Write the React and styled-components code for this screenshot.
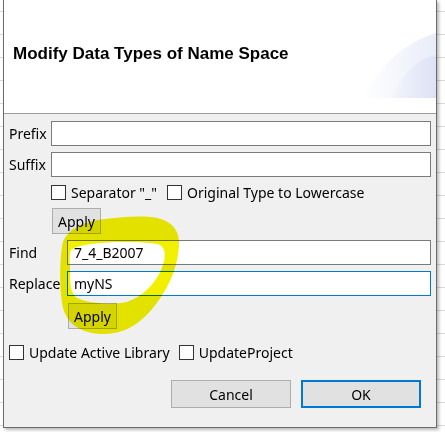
import React from "react"
import styled, { createGlobalStyle } from "styled-components"

const GlobalStyle = createGlobalStyle`
  html, body {
    margin: 0;
    padding: 0;
  }
  body {
    width: 445px;
    height: 432px;
    overflow: hidden;
    background-color: #ffffff;
    background-image: repeating-linear-gradient(
      to bottom,
      transparent 0,
      transparent 11px,
      #d9d9d9 11px,
      #d9d9d9 12px,
      transparent 12px,
      transparent 23px
    );
    font-family: "Noto Sans", "Open Sans", sans-serif;
    color: #000;
  }
`

const Dialog = styled.div`
  position: relative;
  margin-left: 3px;
  width: 432px;
  height: 427px;
  border: 1px solid #6b6b6b;
  border-top: none;
  background: #f0f0f0;
  box-shadow: 2px 2px 3px rgba(0, 0, 0, 0.28);
  display: flex;
  flex-direction: column;
`

const Header = styled.div`
  position: relative;
  box-sizing: border-box;
  flex: none;
  height: 114px;
  background: #ffffff;
  border-bottom: 1px solid #9c9c9c;
  padding: 44px 0 0 9px;
  overflow: hidden;
`

const Title = styled.h1`
  margin: 0;
  font-family: "Liberation Sans", Arial, sans-serif;
  font-weight: bold;
  font-size: 17px;
  line-height: 20px;
  color: #000;
`

const Banner = styled.svg`
  position: absolute;
  right: 0;
  top: 30px;
`

const Body = styled.div`
  flex: 1;
  padding: 7px 5px 0 5px;
  display: flex;
  flex-direction: column;
  font-size: 14px;
`

const FieldRow = styled.div`
  display: grid;
  grid-template-columns: ${p => p.$label}px 1fr;
  align-items: center;
  height: 25px;
  margin-top: ${p => p.$gap || 0}px;
`

const Label = styled.label`
  line-height: 25px;
  white-space: nowrap;
`

const Input = styled.input`
  box-sizing: border-box;
  width: 100%;
  height: 25px;
  margin: 0;
  padding: 0 6px;
  border: 1px solid ${p => (p.$focused ? "#0078d7" : "#7a7a7a")};
  background: #fff;
  font-family: inherit;
  font-size: 14px;
  color: #000;
  outline: none;
`

const CheckRow = styled.div`
  display: flex;
  align-items: center;
  height: 15px;
  margin-top: ${p => p.$gap}px;
  padding-left: ${p => p.$indent}px;
`

const Check = styled.label`
  display: flex;
  align-items: center;
  gap: 5px;
  margin-right: ${p => p.$after || 0}px;
  white-space: nowrap;
  line-height: 15px;
`

const Box = styled.span`
  box-sizing: border-box;
  width: 15px;
  height: 15px;
  border: 1px solid #333;
  background: #fff;
  flex: none;
`

const ApplyButton = styled.button`
  box-sizing: border-box;
  align-self: flex-start;
  width: 49px;
  height: 26px;
  margin: ${p => p.$gap}px 0 0 ${p => p.$indent}px;
  padding: 0;
  border: 1px solid #adadad;
  background: #e1e1e1;
  font-family: inherit;
  font-size: 14px;
  color: #000;
`

const ButtonBar = styled.div`
  display: flex;
  justify-content: flex-end;
  gap: 10px;
  margin-top: 20px;
  padding-right: 10px;
`

const DialogButton = styled.button`
  box-sizing: border-box;
  width: 120px;
  height: 28px;
  margin: 0;
  padding: 0;
  border: ${p => (p.$primary ? "2px solid #0078d7" : "1px solid #adadad")};
  background: #e1e1e1;
  font-family: inherit;
  font-size: 14px;
  color: #000;
`

const Marker = styled.svg`
  position: absolute;
  left: 0;
  top: 0;
  pointer-events: none;
  mix-blend-mode: multiply;
`

export default function App() {
  return (
    <>
      <GlobalStyle />
      <Dialog>
        <Header>
          <Title>Modify Data Types of Name Space</Title>
          <Banner width="82" height="68" viewBox="0 0 82 68">
            <defs>
              <linearGradient id="bannerOuter" x1="0" y1="0" x2="1" y2="0">
                <stop offset="0" stopColor="#ffffff" />
                <stop offset="1" stopColor="#e9edf9" />
              </linearGradient>
              <linearGradient id="bannerInner" x1="0" y1="0" x2="1" y2="0">
                <stop offset="0" stopColor="#f3f5fc" />
                <stop offset="1" stopColor="#dce2f5" />
              </linearGradient>
            </defs>
            <path d="M8 68 C 24 38, 50 12, 82 3 L 82 68 Z" fill="url(#bannerOuter)" />
            <path d="M38 68 C 48 44, 62 29, 82 25 L 82 68 Z" fill="url(#bannerInner)" />
          </Banner>
        </Header>

        <Body>
          <FieldRow $label={42}>
            <Label>Prefix</Label>
            <Input defaultValue="" />
          </FieldRow>
          <FieldRow $label={42} $gap={6}>
            <Label>Suffix</Label>
            <Input defaultValue="" />
          </FieldRow>
          <CheckRow $gap={8} $indent={42}>
            <Check $after={10}>
              <Box />
              Separator "_"
            </Check>
            <Check>
              <Box />
              Original Type to Lowercase
            </Check>
          </CheckRow>
          <ApplyButton $gap={8} $indent={43}>Apply</ApplyButton>

          <FieldRow $label={58} $gap={6}>
            <Label>Find</Label>
            <Input defaultValue="7_4_B2007" />
          </FieldRow>
          <FieldRow $label={58} $gap={6}>
            <Label>Replace</Label>
            <Input $focused defaultValue="myNS" />
          </FieldRow>
          <ApplyButton $gap={7} $indent={59}>Apply</ApplyButton>

          <CheckRow $gap={16} $indent={0}>
            <Check $after={9}>
              <Box />
              Update Active Library
            </Check>
            <Check>
              <Box />
              UpdateProject
            </Check>
          </CheckRow>

          <ButtonBar>
            <DialogButton>Cancel</DialogButton>
            <DialogButton $primary>OK</DialogButton>
          </ButtonBar>
        </Body>

        {/* highlighter loop around the find / replace fields */}
        <Marker width="432" height="427" viewBox="4 0 432 427">
          <path
            fillRule="evenodd"
            fill="#f2ef00"
            d="M150 217 C 167 218, 179 227, 179 242 C 179 264, 170 286, 156 304
               C 144 320, 128 334, 104 334 C 84 334, 68 326, 63 308
               C 59 290, 60 262, 62 246 C 65 230, 82 222, 105 219 C 122 217, 136 216, 150 217 Z
               M71 250 C 80 242, 130 240, 158 244 C 166 247, 167 257, 161 270
               C 155 284, 143 296, 127 302 C 112 305, 90 304, 77 298
               C 71 294, 70 286, 70 272 C 70 262, 69 254, 71 250 Z"
          />
        </Marker>
      </Dialog>
    </>
  )
}
